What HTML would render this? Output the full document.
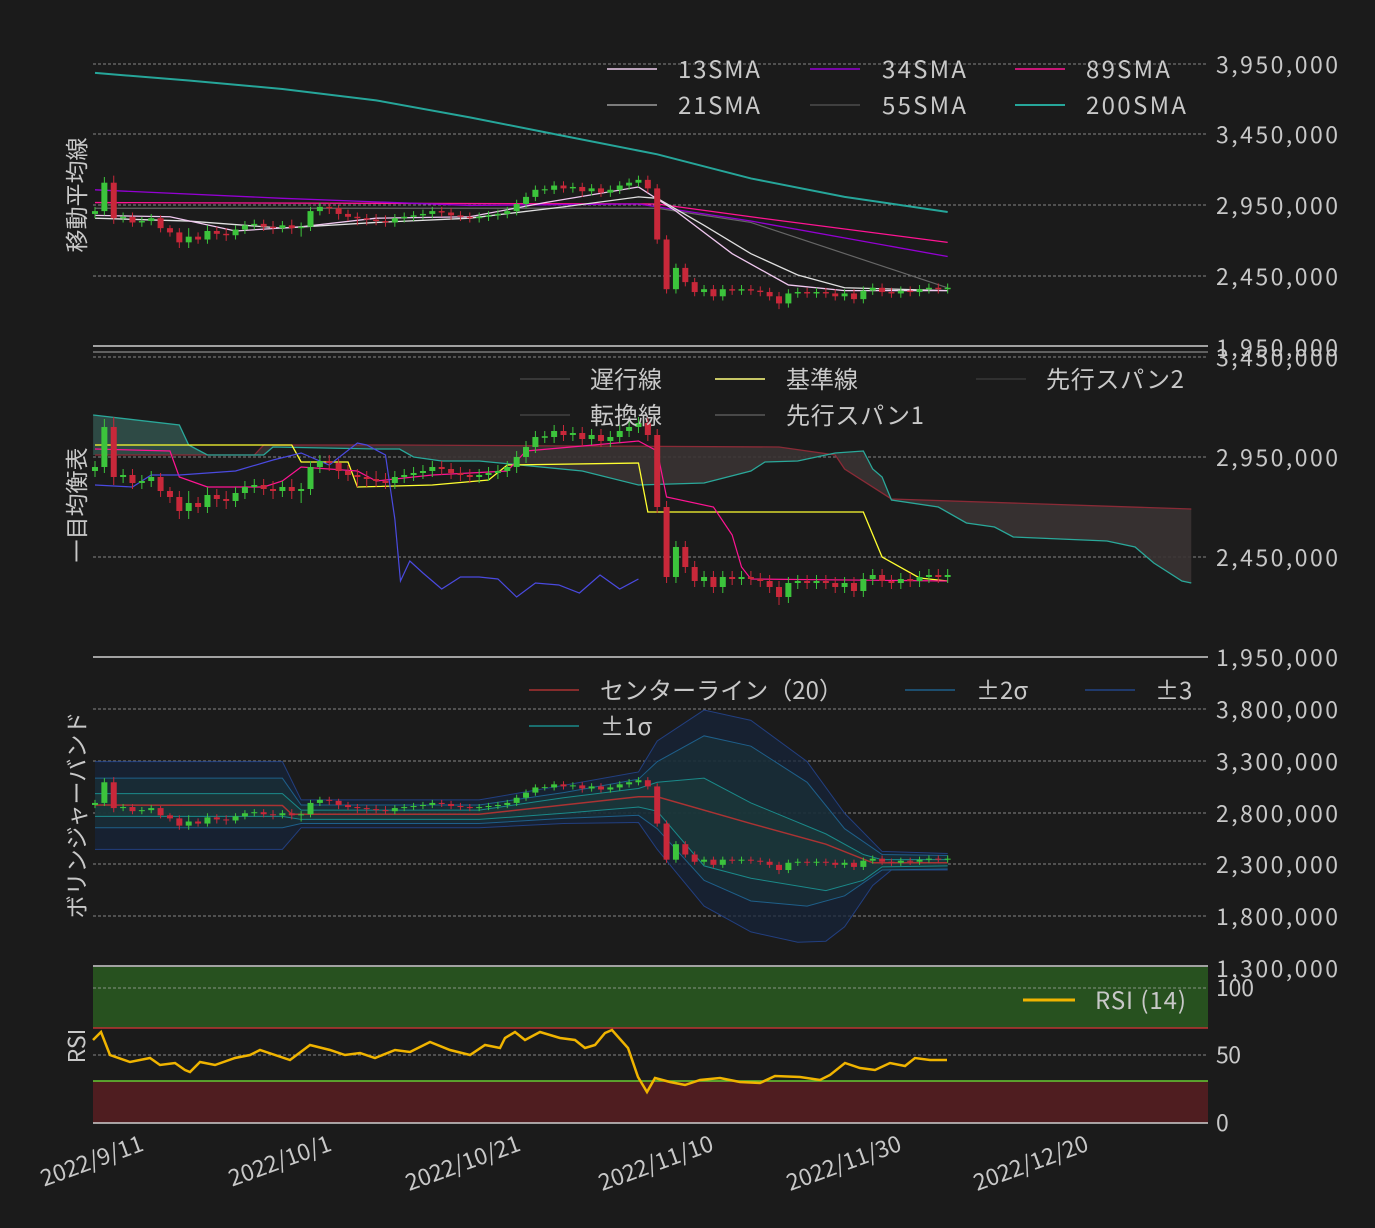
<!DOCTYPE html>
<html><head><meta charset="utf-8"><style>
html,body{margin:0;padding:0;background:#1b1b1b;}
svg{display:block;font-family:"Noto Sans CJK JP","Liberation Sans",sans-serif;}
.t{fill:#c8c8c8;font-size:23px;}
.lg{fill:#c8c8c8;font-size:24px;}
.n{vector-effect:non-scaling-stroke;fill:none;}
</style></head><body>
<svg width="1375" height="1228" viewBox="0 0 1375 1228" xmlns="http://www.w3.org/2000/svg">
<defs>
<g id="cd">
<g fill="#3cc43c">
<path class="n" stroke="#3cc43c" stroke-width="1" d="M0 2850V2930M1 2870V3140M3 2820V2890M5 2790V2860M6 2800V2880M10 2640V2780M12 2670V2800M15 2700V2800M16 2740V2830M17 2770V2840M20 2750V2830M22 2720V2820M23 2760V2930M24 2870V2960M32 2790V2880M33 2820V2890M34 2830V2900M35 2840V2910M36 2850V2930M41 2820V2890M42 2830V2900M43 2840V2910M44 2850V2930M45 2870V2980M46 2920V3030M47 2970V3080M48 3020V3080M49 3020V3110M51 3030V3100M53 3010V3090M55 3000V3080M56 3020V3110M57 3050V3130M58 3070V3150M62 2320V2530M65 2300V2380M67 2270V2380M69 2310V2380M74 2220V2350M75 2290V2360M77 2290V2360M80 2270V2350M82 2250V2370M83 2310V2390M86 2290V2370M88 2300V2380M89 2320V2390M91 2320V2390"/>
<rect x="-0.32" y="2880" width="0.64" height="20"/><rect x="0.68" y="2900" width="0.64" height="200"/><rect x="2.68" y="2850" width="0.64" height="10"/><rect x="4.68" y="2820" width="0.64" height="10"/><rect x="5.68" y="2830" width="0.64" height="20"/><rect x="9.68" y="2680" width="0.64" height="40"/><rect x="11.68" y="2700" width="0.64" height="60"/><rect x="14.68" y="2730" width="0.64" height="40"/><rect x="15.68" y="2770" width="0.64" height="30"/><rect x="16.68" y="2800" width="0.64" height="10"/><rect x="19.68" y="2780" width="0.64" height="20"/><rect x="21.68" y="2780" width="0.64" height="10"/><rect x="22.68" y="2790" width="0.64" height="110"/><rect x="23.68" y="2900" width="0.64" height="30"/><rect x="31.68" y="2820" width="0.64" height="30"/><rect x="32.68" y="2850" width="0.64" height="10"/><rect x="33.68" y="2860" width="0.64" height="10"/><rect x="34.68" y="2870" width="0.64" height="10"/><rect x="35.68" y="2880" width="0.64" height="20"/><rect x="40.68" y="2850" width="0.64" height="10"/><rect x="41.68" y="2860" width="0.64" height="10"/><rect x="42.68" y="2870" width="0.64" height="10"/><rect x="43.68" y="2880" width="0.64" height="20"/><rect x="44.68" y="2900" width="0.64" height="50"/><rect x="45.68" y="2950" width="0.64" height="50"/><rect x="46.68" y="3000" width="0.64" height="50"/><rect x="47.68" y="3046" width="0.64" height="8"/><rect x="48.68" y="3050" width="0.64" height="30"/><rect x="50.68" y="3060" width="0.64" height="10"/><rect x="52.68" y="3040" width="0.64" height="20"/><rect x="54.68" y="3030" width="0.64" height="20"/><rect x="55.68" y="3050" width="0.64" height="30"/><rect x="56.68" y="3080" width="0.64" height="20"/><rect x="57.68" y="3100" width="0.64" height="20"/><rect x="61.68" y="2350" width="0.64" height="150"/><rect x="64.68" y="2330" width="0.64" height="20"/><rect x="66.68" y="2300" width="0.64" height="50"/><rect x="68.68" y="2340" width="0.64" height="10"/><rect x="73.68" y="2250" width="0.64" height="70"/><rect x="74.68" y="2320" width="0.64" height="10"/><rect x="76.68" y="2320" width="0.64" height="10"/><rect x="79.68" y="2300" width="0.64" height="20"/><rect x="81.68" y="2280" width="0.64" height="60"/><rect x="82.68" y="2340" width="0.64" height="20"/><rect x="85.68" y="2320" width="0.64" height="20"/><rect x="87.68" y="2330" width="0.64" height="20"/><rect x="88.68" y="2350" width="0.64" height="10"/><rect x="90.68" y="2350" width="0.64" height="10"/>
</g>
<g fill="#c8283a">
<path class="n" stroke="#c8283a" stroke-width="1" d="M2 2810V3150M4 2790V2890M7 2750V2870M8 2720V2800M9 2640V2780M11 2670V2750M13 2700V2790M14 2690V2780M18 2760V2840M19 2740V2830M21 2740V2840M25 2880V2960M26 2840V2940M27 2830V2910M28 2800V2890M29 2800V2880M30 2800V2880M31 2790V2870M37 2860V2930M38 2840V2920M39 2830V2900M40 2820V2890M50 3030V3110M52 3000V3100M54 3000V3090M59 3030V3150M60 2670V3090M61 2320V2730M63 2370V2530M64 2300V2430M66 2270V2380M68 2310V2380M70 2310V2380M71 2300V2370M72 2270V2360M73 2210V2330M76 2290V2360M78 2290V2360M79 2270V2350M81 2250V2350M84 2300V2390M85 2290V2360M87 2300V2370M90 2320V2390"/>
<rect x="1.68" y="2850" width="0.64" height="250"/><rect x="3.68" y="2820" width="0.64" height="40"/><rect x="6.68" y="2780" width="0.64" height="70"/><rect x="7.68" y="2750" width="0.64" height="30"/><rect x="8.68" y="2680" width="0.64" height="70"/><rect x="10.68" y="2700" width="0.64" height="20"/><rect x="12.68" y="2740" width="0.64" height="20"/><rect x="13.68" y="2730" width="0.64" height="10"/><rect x="17.68" y="2790" width="0.64" height="20"/><rect x="18.68" y="2780" width="0.64" height="10"/><rect x="20.68" y="2780" width="0.64" height="20"/><rect x="24.68" y="2920" width="0.64" height="10"/><rect x="25.68" y="2880" width="0.64" height="40"/><rect x="26.68" y="2860" width="0.64" height="20"/><rect x="27.68" y="2850" width="0.64" height="10"/><rect x="28.68" y="2840" width="0.64" height="10"/><rect x="29.68" y="2830" width="0.64" height="10"/><rect x="30.68" y="2820" width="0.64" height="10"/><rect x="36.68" y="2890" width="0.64" height="10"/><rect x="37.68" y="2870" width="0.64" height="20"/><rect x="38.68" y="2860" width="0.64" height="10"/><rect x="39.68" y="2850" width="0.64" height="10"/><rect x="49.68" y="3060" width="0.64" height="20"/><rect x="51.68" y="3040" width="0.64" height="30"/><rect x="53.68" y="3030" width="0.64" height="30"/><rect x="58.68" y="3060" width="0.64" height="60"/><rect x="59.68" y="2700" width="0.64" height="360"/><rect x="60.68" y="2350" width="0.64" height="350"/><rect x="62.68" y="2400" width="0.64" height="100"/><rect x="63.68" y="2330" width="0.64" height="70"/><rect x="65.68" y="2300" width="0.64" height="50"/><rect x="67.68" y="2340" width="0.64" height="10"/><rect x="69.68" y="2340" width="0.64" height="10"/><rect x="70.68" y="2330" width="0.64" height="10"/><rect x="71.68" y="2300" width="0.64" height="30"/><rect x="72.68" y="2250" width="0.64" height="50"/><rect x="75.68" y="2320" width="0.64" height="10"/><rect x="77.68" y="2320" width="0.64" height="10"/><rect x="78.68" y="2300" width="0.64" height="20"/><rect x="80.68" y="2280" width="0.64" height="40"/><rect x="83.68" y="2330" width="0.64" height="30"/><rect x="84.68" y="2320" width="0.64" height="10"/><rect x="86.68" y="2330" width="0.64" height="10"/><rect x="89.68" y="2350" width="0.64" height="10"/>
</g>
</g>
</defs>
<rect width="1375" height="1228" fill="#1b1b1b"/>
<rect x="93" y="967" width="1115" height="61" fill="#27511f"/>
<rect x="93" y="1081" width="1115" height="42" fill="#4f1d20"/>
<line x1="93" y1="1028" x2="1208" y2="1028" stroke="#b33" stroke-width="1.5"/>
<line x1="93" y1="1081" x2="1208" y2="1081" stroke="#6c3" stroke-width="1.5"/>
<g stroke="#a8a8a8" stroke-width="0.8" stroke-dasharray="3,2">
<line x1="93" y1="64" x2="1208" y2="64"/><line x1="93" y1="134" x2="1208" y2="134"/><line x1="93" y1="205" x2="1208" y2="205"/><line x1="93" y1="276" x2="1208" y2="276"/>
<line x1="93" y1="357" x2="1208" y2="357"/><line x1="93" y1="457" x2="1208" y2="457"/><line x1="93" y1="557" x2="1208" y2="557"/>
<line x1="93" y1="709" x2="1208" y2="709"/><line x1="93" y1="761" x2="1208" y2="761"/><line x1="93" y1="813" x2="1208" y2="813"/><line x1="93" y1="864" x2="1208" y2="864"/><line x1="93" y1="916" x2="1208" y2="916"/>
<line x1="93" y1="988" x2="1208" y2="988"/><line x1="93" y1="1055" x2="1208" y2="1055"/>
</g>
<g stroke="#d0d0d0" stroke-width="1.5">
<line x1="93" y1="346" x2="1208" y2="346"/><line x1="93" y1="352" x2="1208" y2="352" stroke="#777"/>
<line x1="93" y1="657" x2="1208" y2="657"/><line x1="93" y1="966" x2="1208" y2="966"/><line x1="93" y1="1123" x2="1208" y2="1123"/>
</g>

<g transform="translate(95,622.9) scale(9.37,-0.142)">
<polyline class="n" stroke="#26a69a" stroke-width="2" points="0,3873 10,3820 20,3760 30,3680 40,3560 50,3430 60,3300 70,3130 80,3000 91,2894"/>
<polyline class="n" stroke="#ff1493" stroke-width="1.3" points="0,2960 60,2950 70,2860 91,2680"/>
<polyline class="n" stroke="#9400d3" stroke-width="1.3" points="0,3050 20,2990 40,2940 58,2950 70,2830 91,2580"/>
<polyline class="n" stroke="#666" stroke-width="1.2" points="0,2920 60,2920 70,2820 91,2360"/>
<polyline class="n" stroke="#e0e0e0" stroke-width="1.3" points="0,2850 10,2830 20,2780 30,2820 40,2850 50,2930 58,3000 60,2990 65,2800 70,2600 75,2450 80,2360 91,2340"/>
<polyline class="n" stroke="#f0c8f0" stroke-width="1.3" points="0,2870 8,2860 15,2760 22,2790 30,2850 40,2860 48,2960 58,3070 62,2900 68,2600 74,2380 80,2340 91,2340"/>
<use href="#cd"/>
</g>

<g transform="translate(95,1047) scale(9.37,-0.2)">
<polygon fill="#2e4a45" points="-0.2,3160 9,3110 10,3010 12,2960 17,2960 17,2960 0,2960 -0.2,2960"/>
<polygon fill="#3a3333" opacity="0.9" points="17,2960 18,3010 32,3010 73,3000 79,2960 80,2890 85,2740 117,2690 117,2320 116,2330 113,2420 111,2500 108,2530 103,2540 98,2550 96,2600 93,2620 90,2700 85,2735 84,2850 83,2890 82,2980 79,2970 75,2930 71.5,2925 70,2880 65,2820 58,2810 52,2880 41,2930 37,2930 34,2950 32.5,2990 19,3000 18,2960"/>
<polyline class="n" stroke="#8a2a36" stroke-width="1.3" points="0,2960 17,2960 18,3010 32,3010 73,3000 79,2960 80,2890 85,2740 117,2690"/>
<polyline class="n" stroke="#2aa89a" stroke-width="1.3" points="-0.2,3160 9,3110 10,3010 12,2960 18,2960 19,3000 30,2990 32.5,2990 34,2950 37,2930 41,2930 52,2880 58,2810 65,2820 70,2880 71.5,2925 75,2930 79,2970 82,2980 83,2890 84,2850 85,2735 90,2700 93,2620 96,2600 98,2550 103,2540 108,2530 111,2500 113,2420 116,2330 117,2320"/>
<polyline class="n" stroke="#ffff30" stroke-width="1.3" points="0,3010 21,3010 22,2925 27,2925 28,2800 36,2810 42,2835 44,2910 58,2920 59,2675 82,2675 84,2450 88,2345 91,2330"/>
<polyline class="n" stroke="#ff1493" stroke-width="1.2" points="0,2990 8,2980 9,2850 12,2800 18,2800 20,2830 22,2900 28,2880 30,2830 36,2860 44,2880 46,2980 58,3030 60,2980 61,2750 66,2700 68,2560 69,2400 70,2340 91,2330"/>
<polyline class="n" stroke="#4a4ae0" stroke-width="1.2" points="0,2810 4,2800 6,2860 9,2860 15,2880 19,2935 22,2970 25,2910 28,3020 29,3010 31,2960 32,2640 32.6,2330 33.6,2430 35,2370 37,2290 39,2350 41,2350 43,2340 45,2250 47,2320 49.5,2310 51.7,2270 53.9,2360 56,2290 58,2340"/>
<use href="#cd"/>
</g>

<g transform="translate(95,1102.2) scale(9.37,-0.1032)">
<polygon fill="#16233a" opacity="0.7" points="0,3300 20,3300 22,2930 41,2930 50,3070 58,3200 60,3500 65,3800 70,3700 76,3300 80,2800 84,2430 91,2410 91,2250 85,2250 83,2100 80,1700 78,1560 75,1550 70,1650 65,1900 60,2450 58,2710 50,2700 41,2660 22,2660 20,2450 0,2450"/>
<polygon fill="#1a3038" opacity="0.7" points="0,3140 20,3140 22,2880 41,2880 50,3000 58,3130 60,3300 65,3550 70,3450 76,3100 80,2650 84,2400 91,2390 91,2260 84,2250 80,2000 76,1900 70,1950 65,2150 60,2650 58,2780 50,2750 41,2700 22,2700 20,2660 0,2660"/>
<polygon fill="#1c3a3a" opacity="0.6" points="0,2990 20,2990 22,2830 41,2830 50,2950 58,3040 60,3100 65,3140 70,2900 78,2600 82,2400 84,2350 91,2350 91,2290 84,2280 82,2150 78,2050 70,2170 65,2290 60,2820 58,2860 50,2800 41,2740 22,2740 20,2770 0,2770"/>
<polyline class="n" stroke="#223f80" points="0,3300 20,3300 22,2930 41,2930 50,3070 58,3200 60,3500 65,3800 70,3700 76,3300 80,2800 84,2430 91,2410"/>
<polyline class="n" stroke="#223f80" points="0,2450 20,2450 22,2660 41,2660 50,2700 58,2710 60,2450 65,1900 70,1650 75,1550 78,1560 80,1700 83,2100 85,2250 91,2250"/>
<polyline class="n" stroke="#1e5f8a" points="0,3140 20,3140 22,2880 41,2880 50,3000 58,3130 60,3300 65,3550 70,3450 76,3100 80,2650 84,2400 91,2390"/>
<polyline class="n" stroke="#1e5f8a" points="0,2660 20,2660 22,2700 41,2700 50,2750 58,2780 60,2650 65,2150 70,1950 76,1900 80,2000 84,2250 91,2260"/>
<polyline class="n" stroke="#1a8a8a" points="0,2990 20,2990 22,2830 41,2830 50,2950 58,3040 60,3100 65,3140 70,2900 78,2600 82,2400 84,2350 91,2350"/>
<polyline class="n" stroke="#1a8a8a" points="0,2770 20,2770 22,2740 41,2740 50,2800 58,2860 60,2820 65,2290 70,2170 78,2050 82,2150 84,2280 91,2290"/>
<polyline class="n" stroke="#a33" stroke-width="1.5" points="0,2880 20,2875 21,2790 41,2790 50,2880 58,2960 60,2960 70,2700 78,2500 83,2320 91,2320"/>
<use href="#cd"/>
</g>

<polyline fill="none" stroke="#f0b400" stroke-width="2.5" points="93,1040 101,1032 110,1055 130,1062 150,1058 160,1065 175,1063 185,1070 190,1072 200,1062 215,1065 235,1058 250,1055 260,1050 290,1060 310,1045 330,1050 345,1055 360,1053 375,1058 395,1050 410,1052 430,1042 450,1050 470,1055 485,1045 500,1048 505,1038 515,1032 525,1040 540,1032 560,1038 575,1040 585,1048 595,1045 605,1033 612,1030 628,1048 638,1077 647,1092 655,1078 670,1082 685,1085 700,1080 720,1078 740,1082 760,1083 775,1076 800,1077 820,1080 830,1075 845,1063 860,1068 875,1070 890,1063 905,1066 915,1058 930,1060 947,1060"/>

<g class="t">
<text x="1216" y="73" textLength="122">3,950,000</text><text x="1216" y="143" textLength="122">3,450,000</text><text x="1216" y="214" textLength="122">2,950,000</text><text x="1216" y="285" textLength="122">2,450,000</text><text x="1216" y="356" textLength="122">1,950,000</text>
<text x="1216" y="366" textLength="122">3,450,000</text><text x="1216" y="466" textLength="122">2,950,000</text><text x="1216" y="566" textLength="122">2,450,000</text><text x="1216" y="666" textLength="122">1,950,000</text>
<text x="1216" y="718" textLength="122">3,800,000</text><text x="1216" y="770" textLength="122">3,300,000</text><text x="1216" y="822" textLength="122">2,800,000</text><text x="1216" y="873" textLength="122">2,300,000</text><text x="1216" y="925" textLength="122">1,800,000</text><text x="1216" y="977" textLength="122">1,300,000</text>
<text x="1216" y="996" textLength="38">100</text><text x="1216" y="1063" textLength="25">50</text><text x="1216" y="1131">0</text>
</g>
<g class="t" font-size="20">
<text transform="translate(85,195) rotate(-90)" text-anchor="middle">移動平均線</text>
<text transform="translate(85,505) rotate(-90)" text-anchor="middle">一目均衡表</text>
<text transform="translate(85,815) rotate(-90)" text-anchor="middle">ボリンジャーバンド</text>
<text transform="translate(85,1046) rotate(-90)" text-anchor="middle">RSI</text>
</g>
<g class="t" font-size="21">
<text transform="translate(145,1150) rotate(-20)" text-anchor="end">2022/9/11</text>
<text transform="translate(333,1150) rotate(-20)" text-anchor="end">2022/10/1</text>
<text transform="translate(522,1150) rotate(-20)" text-anchor="end">2022/10/21</text>
<text transform="translate(715,1150) rotate(-20)" text-anchor="end">2022/11/10</text>
<text transform="translate(903,1150) rotate(-20)" text-anchor="end">2022/11/30</text>
<text transform="translate(1090,1150) rotate(-20)" text-anchor="end">2022/12/20</text>
</g>
<g class="lg">
<line x1="607" y1="69" x2="657" y2="69" stroke="#f0d0f0" stroke-width="1.5"/><text x="678" y="78" textLength="82">13SMA</text>
<line x1="810" y1="69" x2="860" y2="69" stroke="#9400d3" stroke-width="1.5"/><text x="882" y="78" textLength="84">34SMA</text>
<line x1="1015" y1="69" x2="1065" y2="69" stroke="#ff1493" stroke-width="1.5"/><text x="1086" y="78" textLength="84">89SMA</text>
<line x1="607" y1="105" x2="657" y2="105" stroke="#ddd" stroke-width="1"/><text x="678" y="114" textLength="82">21SMA</text>
<line x1="810" y1="105" x2="860" y2="105" stroke="#666" stroke-width="1"/><text x="882" y="114" textLength="84">55SMA</text>
<line x1="1015" y1="105" x2="1065" y2="105" stroke="#26a69a" stroke-width="2"/><text x="1086" y="114" textLength="100">200SMA</text>
<line x1="520" y1="379" x2="570" y2="379" stroke="#555" stroke-width="1"/><text x="590" y="388">遅行線</text>
<line x1="715" y1="379" x2="765" y2="379" stroke="#ffff80" stroke-width="1.5"/><text x="786" y="388">基準線</text>
<line x1="976" y1="379" x2="1026" y2="379" stroke="#444" stroke-width="1"/><text x="1046" y="388" textLength="138">先行スパン2</text>
<line x1="520" y1="415" x2="570" y2="415" stroke="#555" stroke-width="1"/><text x="590" y="424">転換線</text>
<line x1="715" y1="415" x2="765" y2="415" stroke="#777" stroke-width="1"/><text x="786" y="424" textLength="138">先行スパン1</text>
<line x1="529" y1="690" x2="579" y2="690" stroke="#a33" stroke-width="1.5"/><text x="600" y="699" textLength="243">センターライン（20）</text>
<line x1="905" y1="690" x2="955" y2="690" stroke="#1e5f8a" stroke-width="1.5"/><text x="976" y="699">±2σ</text>
<line x1="1085" y1="690" x2="1135" y2="690" stroke="#224488" stroke-width="1.5"/><text x="1155" y="699">±3</text>
<line x1="529" y1="726" x2="579" y2="726" stroke="#1a8a8a" stroke-width="1.5"/><text x="600" y="735">±1σ</text>
<line x1="1023" y1="1000" x2="1075" y2="1000" stroke="#f0b400" stroke-width="3"/><text x="1095" y="1009" textLength="91">RSI (14)</text>
</g>
</svg>
</body></html>
